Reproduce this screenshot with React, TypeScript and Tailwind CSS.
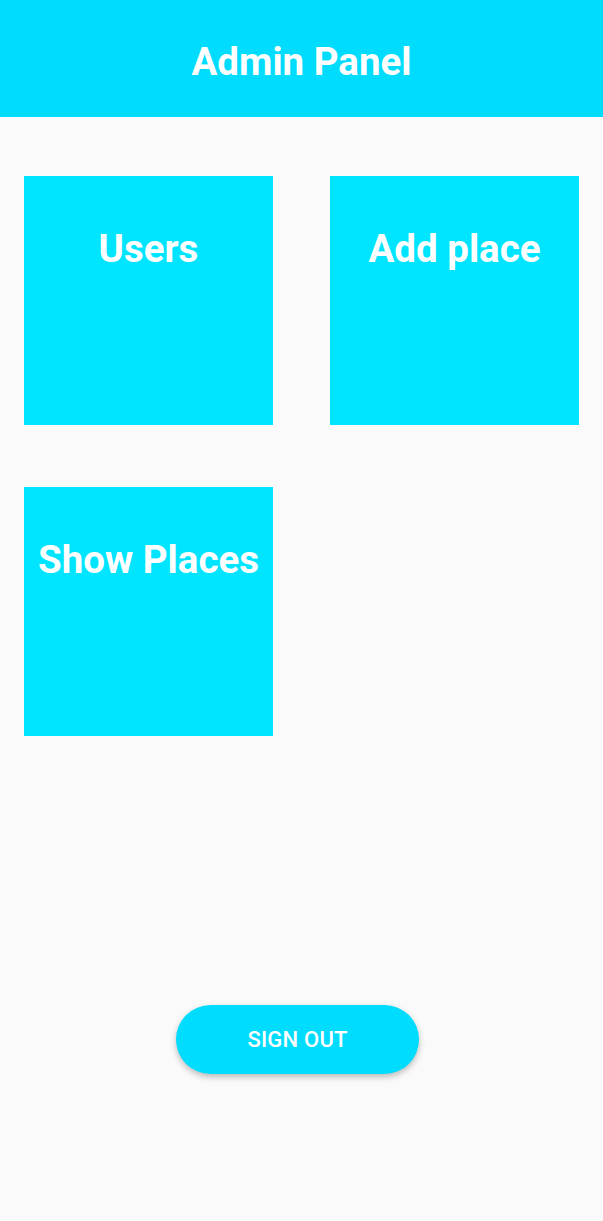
export default function App() {
  const font = { fontFamily: "Roboto, 'Noto Sans', sans-serif" };
  return (
    <div className="min-h-[1221px] w-full bg-[#fafafa]" style={font}>
      <header className="h-[117px] bg-[#00dcfe] flex items-center justify-center">
        <h1 className="text-[38.5px] leading-[46px] font-bold text-white pt-[6px]">Admin Panel</h1>
      </header>
      <div className="grid grid-cols-[249px_249px] gap-x-[57px] gap-y-[62px] pl-[24px] pt-[59px]">
        {["Users", "Add place", "Show Places"].map((t) => (
          <div key={t} className="h-[249px] w-[249px] bg-[#00e5ff] flex justify-center pt-[50px]">
            <span className="text-[38.5px] leading-[46px] font-bold text-white whitespace-nowrap">{t}</span>
          </div>
        ))}
      </div>
      <div className="flex pl-[176px] mt-[269px]">
        <button className="w-[243px] h-[69px] rounded-full bg-[#00dcfe] text-white text-[22px] font-medium tracking-[0.2px] shadow-[0_3px_6px_rgba(0,0,0,0.25)]">
          SIGN OUT
        </button>
      </div>
    </div>
  );
}
